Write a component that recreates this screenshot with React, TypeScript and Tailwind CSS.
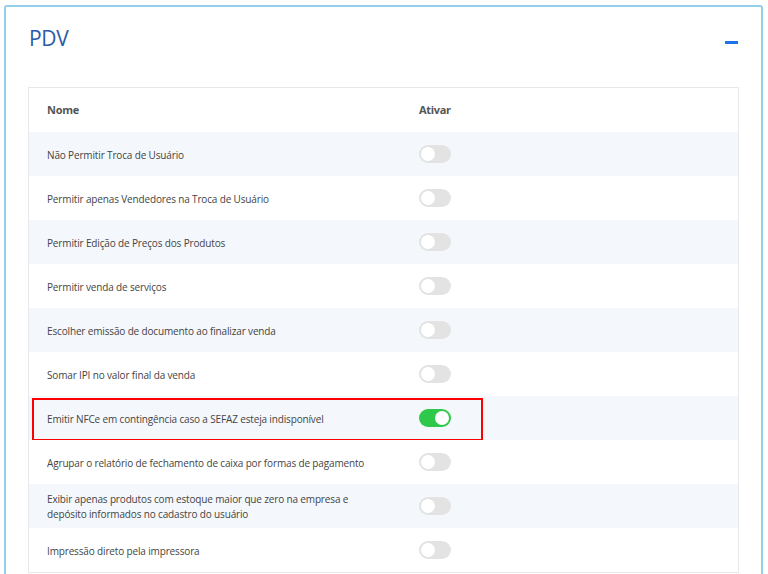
import React from "react";

const rows: { label: React.ReactNode; on?: boolean; highlight?: boolean }[] = [
  { label: "Não Permitir Troca de Usuário" },
  { label: "Permitir apenas Vendedores na Troca de Usuário" },
  { label: "Permitir Edição de Preços dos Produtos" },
  { label: "Permitir venda de serviços" },
  { label: "Escolher emissão de documento ao finalizar venda" },
  { label: "Somar IPI no valor final da venda" },
  { label: "Emitir NFCe em contingência caso a SEFAZ esteja indisponível", on: true, highlight: true },
  { label: "Agrupar o relatório de fechamento de caixa por formas de pagamento" },
  {
    label: (
      <>
        Exibir apenas produtos com estoque maior que zero na empresa e
        <br />
        depósito informados no cadastro do usuário
      </>
    ),
  },
  { label: "Impressão direto pela impressora" },
];

function Toggle({ on }: { on?: boolean }) {
  return (
    <div
      className={
        on
          ? "w-[32px] h-[18px] rounded-full bg-[#2ec94a] flex items-center justify-end px-[2px]"
          : "w-[32px] h-[18px] rounded-full bg-[#e3e3e3] flex items-center justify-start px-[2px]"
      }
    >
      <div className="w-[14px] h-[14px] rounded-full bg-white" />
    </div>
  );
}

export default function App() {
  return (
    <div className="w-[768px] h-[574px] overflow-hidden bg-white pt-[5px] pl-[4px] pr-[5px] font-['Open_Sans',sans-serif]">
      <div className="h-[600px] border-[2px] border-[#93cfe8] rounded-[3px] bg-white px-[22px]">
        <div className="flex items-center justify-between h-[80px] pb-[16px]">
          <div className="text-[21px] text-[#2c5aa8] pl-[1px] tracking-[-0.3px]">PDV</div>
          <div className="w-[13px] h-[3px] bg-[#1a73e8] mr-[1px] mt-[7px]" />
        </div>
        <div className="border border-[#e6e8eb]">
          <div className="flex items-center h-[44px] text-[11px] font-bold text-[#555] tracking-[-0.3px]">
            <div className="w-[390px] pl-[18px]">Nome</div>
            <div>Ativar</div>
          </div>
          {rows.map((r, i) => (
            <div
              key={i}
              className={
                (i % 2 === 0 ? "bg-[#f4f7fb] " : "bg-white ") +
                "relative flex items-center h-[44px] text-[10px] text-[#444] tracking-[-0.15px]"
              }
            >
              <div className="w-[390px] pl-[18px] pt-[2px] leading-[15px]">{r.label}</div>
              <Toggle on={r.on} />
              {r.highlight && (
                <div className="absolute left-[3px] top-[2px] w-[451px] h-[43px] border-[2px] border-[#ff0000]" />
              )}
            </div>
          ))}
        </div>
      </div>
    </div>
  );
}
